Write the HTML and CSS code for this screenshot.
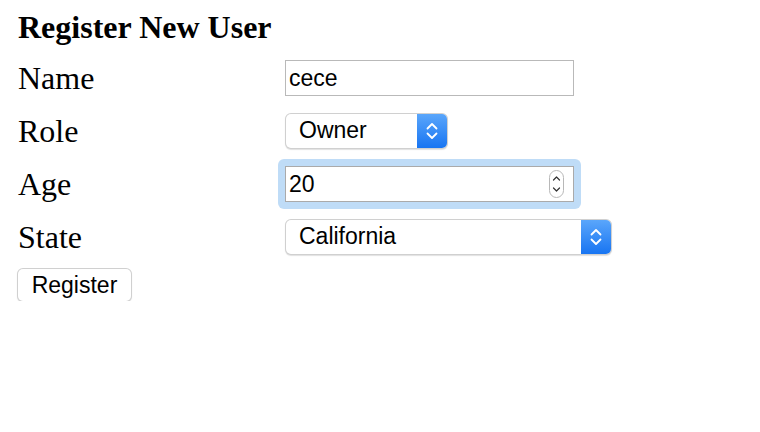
FILE: index.html
```html
<!DOCTYPE html>
<html>
<head>
<meta charset="utf-8">
<link rel="stylesheet" href="styles.css">
</head>
<body>
<div class="page">
  <h2 class="title">Register New User</h2>
  <div class="form">
    <div class="label">Name</div>
    <div class="field"><div class="text-input">cece</div></div>

    <div class="label">Role</div>
    <div class="field">
      <div class="select select-role">
        <span class="select-text">Owner</span>
        <span class="select-btn">
          <svg width="14" height="20" viewBox="0 0 14 20"><path d="M2.5 7.5 L7 3 L11.5 7.5 M2.5 12.5 L7 17 L11.5 12.5" fill="none" stroke="#fff" stroke-width="1.8" stroke-linecap="round" stroke-linejoin="round"/></svg>
        </span>
      </div>
    </div>

    <div class="label">Age</div>
    <div class="field">
      <div class="focus-ring">
        <div class="text-input number-input">
          <span>20</span>
          <span class="spinner">
            <svg width="15" height="28" viewBox="0 0 15 28"><rect x="0.5" y="0.5" width="14" height="27" rx="7" fill="#fff" stroke="#b8b8b8"/><path d="M4.5 10 L7.5 7 L10.5 10 M4.5 18 L7.5 21 L10.5 18" fill="none" stroke="#333" stroke-width="1.2" stroke-linecap="round" stroke-linejoin="round"/></svg>
          </span>
        </div>
      </div>
    </div>

    <div class="label">State</div>
    <div class="field">
      <div class="select select-state">
        <span class="select-text">California</span>
        <span class="select-btn">
          <svg width="14" height="20" viewBox="0 0 14 20"><path d="M2.5 7.5 L7 3 L11.5 7.5 M2.5 12.5 L7 17 L11.5 12.5" fill="none" stroke="#fff" stroke-width="1.8" stroke-linecap="round" stroke-linejoin="round"/></svg>
        </span>
      </div>
    </div>
  </div>
  <div class="actions"><button class="btn">Register</button></div>
</div>
</body>
</html>
```
FILE: styles.css
```css
html, body {
  margin: 0;
  padding: 0;
  background: #fff;
}
.page {
  padding: 0 0 0 18px;
  font-family: "Liberation Serif", "Times New Roman", serif;
  color: #000;
}
.title {
  margin: 0;
  height: 51px;
  font-size: 32px;
  line-height: 54px;
  font-weight: bold;
}
.form {
  display: grid;
  grid-template-columns: 267px auto;
  grid-auto-rows: 53px;
  align-items: center;
}
.label {
  font-size: 32px;
  line-height: 36px;
}
.field {
  display: flex;
  align-items: center;
}
.text-input {
  box-sizing: border-box;
  width: 289px;
  height: 36px;
  border: 1px solid #b9b9b9;
  padding: 0 3px;
  font-family: "Liberation Sans", Arial, sans-serif;
  font-size: 23px;
  line-height: 34px;
  display: flex;
  align-items: center;
  justify-content: space-between;
}
.focus-ring {
  margin-left: -7px;
  padding: 7px;
  border-radius: 6px;
  background: #bfdcf7;
}
.number-input {
  width: 289px;
  background: #fff;
  border-color: #aaa;
}
.spinner {
  display: flex;
  margin-right: 6px;
}
.select {
  box-sizing: border-box;
  height: 34px;
  margin-left: 1px;
  display: flex;
  align-items: stretch;
  border-radius: 5px;
  background: #fff;
  box-shadow: 0 0 0 1px #d0d0d0, 0 1px 1px 1px rgba(0,0,0,0.12);
  font-family: "Liberation Sans", Arial, sans-serif;
  font-size: 23px;
  overflow: hidden;
}
.select-role { width: 161px; }
.select-state { width: 325px; }
.select-text {
  flex: 1;
  padding-left: 13px;
  display: flex;
  align-items: center;
}
.select-btn {
  width: 30px;
  background: linear-gradient(#5aa6fb, #1875f2);
  display: flex;
  align-items: center;
  justify-content: center;
}
.actions {
  padding-top: 6px;
}
.btn {
  margin: 0 0 0 0;
  box-sizing: border-box;
  width: 113px;
  height: 32px;
  background: #fff;
  border: none;
  border-radius: 5px;
  box-shadow: 0 0 0 1px #d0d0d0, 0 1px 1px 1px rgba(0,0,0,0.12);
  font-family: "Liberation Sans", Arial, sans-serif;
  font-size: 23px;
  color: #000;
  padding: 0;
}
```
